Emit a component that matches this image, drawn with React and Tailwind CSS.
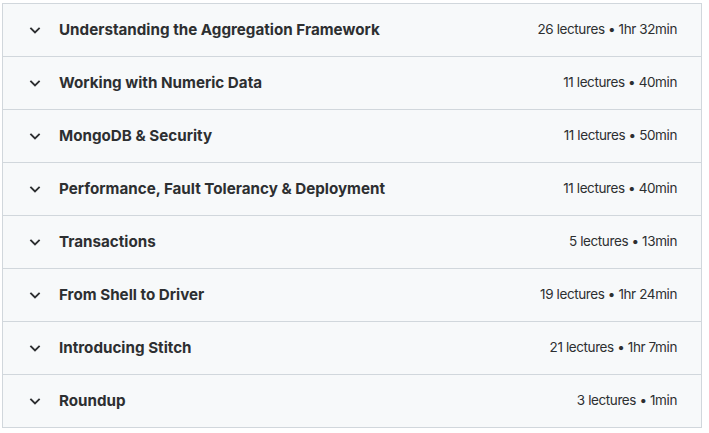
import React from "react";

const sections = [
  { title: "Understanding the Aggregation Framework", meta: "26 lectures • 1hr 32min" },
  { title: "Working with Numeric Data", meta: "11 lectures • 40min" },
  { title: "MongoDB & Security", meta: "11 lectures • 50min" },
  { title: "Performance, Fault Tolerancy & Deployment", meta: "11 lectures • 40min" },
  { title: "Transactions", meta: "5 lectures • 13min" },
  { title: "From Shell to Driver", meta: "19 lectures • 1hr 24min" },
  { title: "Introducing Stitch", meta: "21 lectures • 1hr 7min" },
  { title: "Roundup", meta: "3 lectures • 1min" },
];

function Chevron() {
  return (
    <svg className="w-4 h-4 shrink-0" viewBox="0 0 16 16" fill="none">
      <path d="M4 6.5l4 4 4-4" stroke="#2d2f31" strokeWidth="1.8" strokeLinecap="square" />
    </svg>
  );
}

export default function App() {
  return (
    <div className="min-h-screen bg-white pt-[3px] pl-[2px]" style={{ fontFamily: "Inter, 'Noto Sans', sans-serif" }}>
      <div className="w-[700px] border border-[#d1d7dc] bg-[#f7f9fa]">
        {sections.map((s, i) => (
          <div
            key={s.title}
            className={`flex h-[52px] items-center justify-between pl-6 pr-6 ${i > 0 ? "border-t border-[#d1d7dc] h-[53px]" : ""}`}
          >
            <div className="flex items-center gap-4">
              <Chevron />
              <span className="text-[15.2px] font-bold text-[#2d2f31] leading-none">{s.title}</span>
            </div>
            <span className="text-[13.5px] text-[#2d2f31] tracking-[-0.4px] leading-none">{s.meta}</span>
          </div>
        ))}
      </div>
    </div>
  );
}
